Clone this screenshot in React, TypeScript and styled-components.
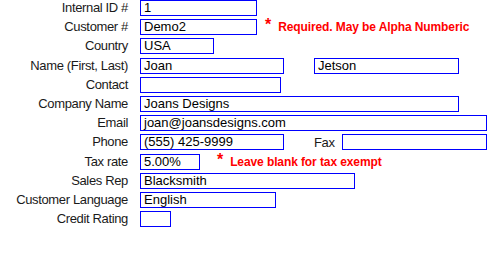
import styled, { createGlobalStyle } from 'styled-components';

const Global = createGlobalStyle`
  body {
    margin: 0;
    background: #fff;
    font-family: "Liberation Sans", Arial, sans-serif;
  }
`;

const Form = styled.div`
  display: grid;
  grid-template-columns: 128px 1fr;
  column-gap: 12px;
  row-gap: 3.2px;
`;

const Label = styled.div`
  height: 16px;
  line-height: 16px;
  text-align: right;
  font-size: 13px;
  letter-spacing: -0.35px;
  color: #1a1a1a;
  white-space: nowrap;
`;

const Line = styled.div`
  display: flex;
  align-items: center;
  height: 16px;
`;

const Field = styled.div<{ $w: number }>`
  box-sizing: border-box;
  width: ${(p) => p.$w}px;
  height: 16px;
  border: 1px solid #0000ff;
  padding-left: 3px;
  font-size: 13px;
  line-height: 14px;
  color: #000;
  white-space: nowrap;
  overflow: hidden;
`;

const Note = styled.span<{ $ml: number }>`
  margin-left: ${(p) => p.$ml}px;
  color: #ff0000;
  font-weight: bold;
  font-size: 12px;
  letter-spacing: -0.1px;
  white-space: nowrap;
  display: flex;
  align-items: center;
`;

const Star = styled.span`
  font-size: 16px;
  margin-right: 7px;
  position: relative;
  top: -2px;
`;

const SideLabel = styled.span`
  margin-left: 30px;
  margin-right: 7px;
  font-size: 13px;
  letter-spacing: -0.35px;
  color: #1a1a1a;
`;

const Spacer = styled.div`
  width: 30px;
`;

export default function App() {
  return (
    <>
      <Global />
      <Form>
        <Label>Internal ID #</Label>
        <Line>
          <Field $w={117}>1</Field>
        </Line>

        <Label>Customer #</Label>
        <Line>
          <Field $w={117}>Demo2</Field>
          <Note $ml={8}>
            <Star>*</Star>Required. May be Alpha Numberic
          </Note>
        </Line>

        <Label>Country</Label>
        <Line>
          <Field $w={74}>USA</Field>
        </Line>

        <Label>Name (First, Last)</Label>
        <Line>
          <Field $w={144}>Joan</Field>
          <Spacer />
          <Field $w={145}>Jetson</Field>
        </Line>

        <Label>Contact</Label>
        <Line>
          <Field $w={141}></Field>
        </Line>

        <Label>Company Name</Label>
        <Line>
          <Field $w={319}>Joans Designs</Field>
        </Line>

        <Label>Email</Label>
        <Line>
          <Field $w={347}>joan@joansdesigns.com</Field>
        </Line>

        <Label>Phone</Label>
        <Line>
          <Field $w={144}>(555) 425-9999</Field>
          <SideLabel>Fax</SideLabel>
          <Field $w={145}></Field>
        </Line>

        <Label>Tax rate</Label>
        <Line>
          <Field $w={60}>5.00%</Field>
          <Note $ml={17}>
            <Star>*</Star>Leave blank for tax exempt
          </Note>
        </Line>

        <Label>Sales Rep</Label>
        <Line>
          <Field $w={215}>Blacksmith</Field>
        </Line>

        <Label>Customer Language</Label>
        <Line>
          <Field $w={136}>English</Field>
        </Line>

        <Label>Credit Rating</Label>
        <Line>
          <Field $w={31}></Field>
        </Line>
      </Form>
    </>
  );
}
